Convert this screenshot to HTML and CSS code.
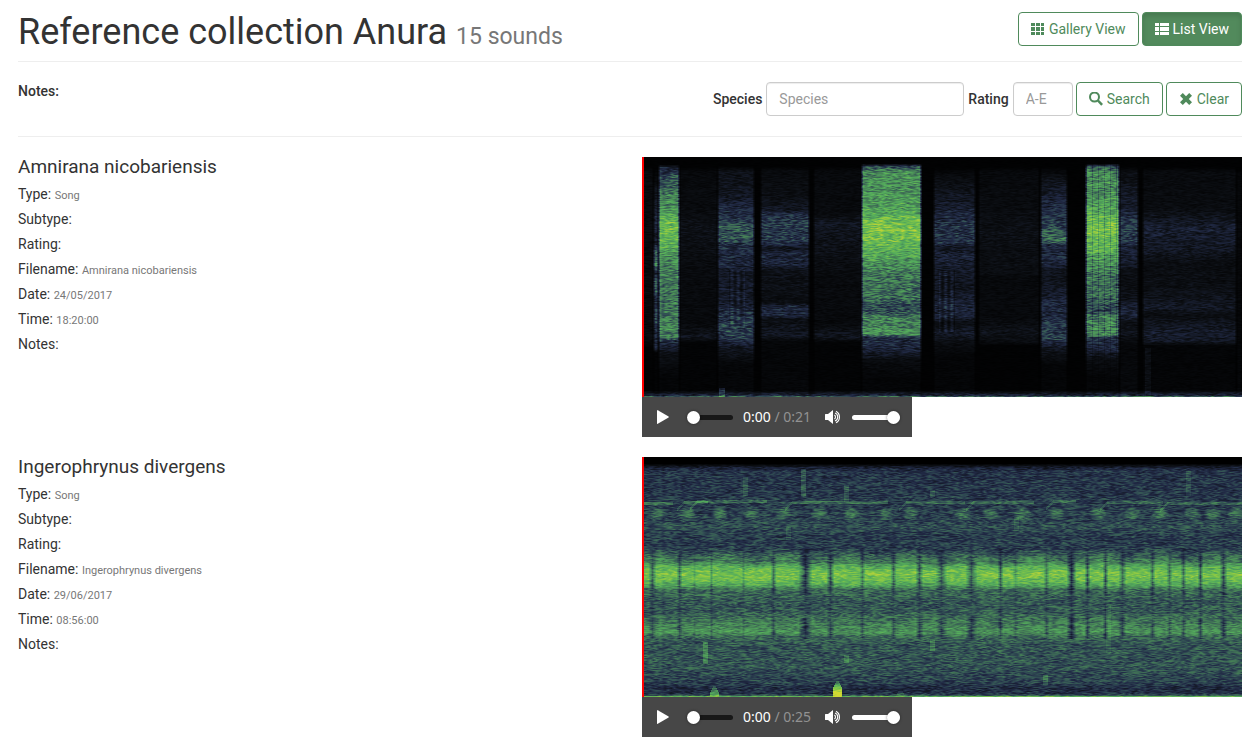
FILE: index.html
```
<!DOCTYPE html>
<html lang="en">
<head>
<meta charset="utf-8">
<title>Reference collection Anura</title>
<link rel="stylesheet" href="styles.css">
</head>
<body>
<svg class="sprite" aria-hidden="true">
  <symbol id="i-grid" viewBox="0 0 14 14"><path d="M0 1h4v3H0zM5 1h4v3H5zM10 1h3v3h-3zM0 5h4v4H0zM5 5h4v4H5zM10 5h3v4h-3zM0 10h4v3H0zM5 10h4v3H5zM10 10h3v3h-3z"/></symbol>
  <symbol id="i-list" viewBox="0 0 14 14"><path d="M0 1h4v3H0zM5 1h9v3H5zM0 5h4v4H0zM5 5h9v4H5zM0 10h4v3H0zM5 10h9v3H5z"/></symbol>
  <symbol id="i-search" viewBox="0 0 14 14"><circle cx="5.5" cy="5" r="4.500" fill="none" stroke="currentColor" stroke-width="2"/><path d="M8 9.2 9.6 7.600l4.400 4.400-1.800 1.800z"/></symbol>
  <symbol id="i-clear" viewBox="0 0 14 14"><path d="M3.8 1 7 4.2 10.2 1 13 3.8 9.8 7l3.2 3.2-2.8 2.8L7 9.8 3.8 13 1 10.2 4.2 7 1 3.8z"/></symbol>
  <symbol id="i-play" viewBox="0 0 12 14"><path d="M0 .4Q0-.2.8.2L11.6 6.5Q12 7 11.6 7.5L.8 13.8Q0 14.2 0 13.6z"/></symbol>
  <symbol id="i-volume" viewBox="0 0 16 14"><path d="M0 4.500Q0 4 .6 4H3L8 0v14L3 10H.6Q0 10 0 9.500z"/><path d="M9.400 5a2.400 2.400 0 0 1 0 4M10 3a4.300 4.300 0 0 1 0 8M11 1.200a6.600 6.600 0 0 1 0 11.600" fill="none" stroke="currentColor" stroke-width="1.100"/></symbol>
</svg>
<header class="page-header">
  <h1 class="page-title">Reference collection Anura <small>15 sounds</small></h1>
  <nav class="views">
    <a class="btn" href="#gallery"><svg class="icon"><use href="#i-grid"/></svg>Gallery View</a>
    <a class="btn btn-active" href="#list"><svg class="icon"><use href="#i-list"/></svg>List View</a>
  </nav>
</header>
<section class="toolbar">
  <p class="collection-notes">Notes:</p>
  <form class="filter">
    <label for="species">Species</label>
    <input class="field field-species" id="species" type="text" placeholder="Species">
    <label for="rating">Rating</label>
    <input class="field field-rating" id="rating" type="text" placeholder="A-E">
    <button class="btn" type="submit"><svg class="icon"><use href="#i-search"/></svg>Search</button>
    <button class="btn" type="reset"><svg class="icon"><use href="#i-clear"/></svg>Clear</button>
  </form>
</section>
<main class="sounds">
  <article class="sound">
    <div class="details">
      <h2 class="species-name">Amnirana nicobariensis</h2>
      <p>Type: <small>Song</small></p>
      <p>Subtype:</p>
      <p>Rating:</p>
      <p>Filename: <small>Amnirana nicobariensis</small></p>
      <p>Date: <small>24/05/2017</small></p>
      <p>Time: <small>18:20:00</small></p>
      <p>Notes:</p>
    </div>
    <div class="media">
      <div class="spectrogram"><canvas width="600" height="240" data-sound="calls" role="img" aria-label="Spectrogram of Amnirana nicobariensis"></canvas></div>
      <div class="player">
        <button class="player-btn" type="button" aria-label="Play"><svg class="play-icon"><use href="#i-play"/></svg></button>
        <input class="slider seek" type="range" min="0" max="21" value="0" aria-label="Position">
        <span class="time">0:00<span class="total"> / 0:21</span></span>
        <button class="player-btn" type="button" aria-label="Mute"><svg class="volume-icon"><use href="#i-volume"/></svg></button>
        <input class="slider volume" type="range" min="0" max="100" value="100" aria-label="Volume">
      </div>
    </div>
  </article>
  <article class="sound">
    <div class="details">
      <h2 class="species-name">Ingerophrynus divergens</h2>
      <p>Type: <small>Song</small></p>
      <p>Subtype:</p>
      <p>Rating:</p>
      <p>Filename: <small>Ingerophrynus divergens</small></p>
      <p>Date: <small>29/06/2017</small></p>
      <p>Time: <small>08:56:00</small></p>
      <p>Notes:</p>
    </div>
    <div class="media">
      <div class="spectrogram"><canvas width="600" height="240" data-sound="chorus" role="img" aria-label="Spectrogram of Ingerophrynus divergens"></canvas></div>
      <div class="player">
        <button class="player-btn" type="button" aria-label="Play"><svg class="play-icon"><use href="#i-play"/></svg></button>
        <input class="slider seek" type="range" min="0" max="25" value="0" aria-label="Position">
        <span class="time">0:00<span class="total"> / 0:25</span></span>
        <button class="player-btn" type="button" aria-label="Mute"><svg class="volume-icon"><use href="#i-volume"/></svg></button>
        <input class="slider volume" type="range" min="0" max="100" value="100" aria-label="Volume">
      </div>
    </div>
  </article>
</main>
<script src="spectrogram.js"></script>
</body>
</html>
```
FILE: styles.css
```
* { box-sizing: border-box; }
body {
  margin: 0;
  padding: 0 16px 0 18px;
  background: #fff;
  color: #333;
  font: 14px/20px Roboto, "Liberation Sans", sans-serif;
}
h1, h2, p { margin: 0; }
small { color: #777; font-weight: 400; line-height: 1; }
.sprite { position: absolute; width: 0; height: 0; }
.page-header {
  display: flex;
  justify-content: space-between;
  align-items: flex-start;
  padding: 12px 0 9px;
  border-bottom: 1px solid #eee;
}
.page-title { font-size: 36px; line-height: 40px; font-weight: 400; }
.page-title small { font-size: 23px; }
.views, .filter { display: flex; align-items: center; gap: 3px; }
.btn {
  display: flex;
  align-items: center;
  gap: 4px;
  height: 34px;
  padding: 0 12px;
  border: 1px solid #4f8a5b;
  border-radius: 4px;
  background: #fff;
  color: #4f8a5b;
  font: inherit;
  text-decoration: none;
  white-space: nowrap;
}
.btn-active { background: #528a5c; color: #fff; box-shadow: inset 0 3px 5px rgba(0, 0, 0, .125); }
.icon { width: 14px; height: 14px; fill: currentColor; }
.toolbar {
  display: flex;
  justify-content: space-between;
  align-items: flex-start;
  padding: 20px 0;
  border-bottom: 1px solid #eee;
}
.collection-notes, .filter label { font-weight: 500; line-height: 18px; }
.filter label { margin: 0 1px; }
.field {
  height: 34px;
  padding: 0 12px;
  border: 1px solid #ccc;
  border-radius: 4px;
  box-shadow: inset 0 1px 1px rgba(0, 0, 0, .075);
  background: #fff;
  font: inherit;
}
.field::placeholder { color: #999; }
.field-species { width: 198px; }
.field-rating { width: 60px; }
.sounds { display: grid; gap: 20px; padding: 20px 0 8px; }
.sound { display: grid; grid-template-columns: 1fr 1fr; gap: 24px; align-items: start; }
.details p { line-height: 15px; margin-bottom: 10px; }
.details small { font-size: 11px; }
.species-name { font-size: 19px; line-height: 20px; font-weight: 400; margin-bottom: 10px; }
.spectrogram { position: relative; max-width: 600px; background: #000; }
.spectrogram canvas { display: block; width: 100%; height: 240px; }
.spectrogram::before {
  content: "";
  position: absolute;
  inset: 0 auto 0 0;
  width: 2px;
  background: #f00;
}
.player {
  display: flex;
  align-items: center;
  width: 270px;
  height: 40px;
  padding: 0 12px 0 15px;
  background: #474747;
  color: #fff;
}
.player-btn { display: flex; padding: 0; border: 0; background: none; color: #fff; }
.play-icon { width: 12px; height: 14px; fill: currentColor; }
.volume-icon { width: 16px; height: 14px; fill: currentColor; }
.time { flex: 1; font: 14px/20px "Noto Sans", sans-serif; white-space: nowrap; }
.total { color: #929292; }
.slider { appearance: none; margin: 0; height: 14px; background: none; }
.seek { width: 46px; margin: 0 10px 0 18px; }
.volume { width: 48px; margin-left: 11px; }
.slider::-webkit-slider-runnable-track { height: 5px; border-radius: 3px; background: #181818; }
.volume::-webkit-slider-runnable-track { background: #fff; }
.slider::-webkit-slider-thumb {
  appearance: none;
  width: 13px;
  height: 13px;
  margin-top: -4px;
  border-radius: 50%;
  background: #fff;
  box-shadow: 0 0 3px rgba(0, 0, 0, .5);
}
```
FILE: spectrogram.js
```
(function () {
  // Colour scale, from silence to the loudest level.
  const SCALE = [
    [0, 0, 0, 0], [0.12, 12, 15, 20], [0.3, 33, 42, 70], [0.42, 50, 80, 84],
    [0.55, 70, 128, 86], [0.7, 84, 172, 92], [0.84, 126, 196, 72], [1, 210, 216, 50]
  ];

  function lerpTable(table, x) {
    if (x <= table[0][0]) return table[0].slice(1);
    for (let i = 1; i < table.length; i++) {
      if (x <= table[i][0]) {
        const a = table[i - 1], b = table[i];
        const t = (x - a[0]) / (b[0] - a[0]);
        return a.slice(1).map((v, k) => v + (b[k + 1] - v) * t);
      }
    }
    return table[table.length - 1].slice(1);
  }

  function hash(x, y) {
    let h = Math.imul(x, 374761393) + Math.imul(y, 668265263) | 0;
    h = Math.imul(h ^ (h >>> 13), 1274126177);
    return ((h ^ (h >>> 16)) >>> 0) / 4294967296;
  }

  // Noise in [-1, 1] that is stretched along the time axis.
  function noise(x, y) {
    const step = 3, shift = hash(7, y) * step;
    const p = (x + shift) / step, i = Math.floor(p), t = p - i;
    const fine = hash(i, y) * (1 - t) + hash(i + 1, y) * t;
    const q = x / 7, j = Math.floor(q), u = q - j, r = (y + 1) >> 1;
    const wide = hash(j + 900, r) * (1 - u) + hash(j + 901, r) * u;
    return (fine * 0.7 + wide * 0.3) * 2 - 1;
  }

  const LOUD = [[6, 0], [9, .38], [14, .58], [40, .61], [55, .68], [64, .78], [74, .82], [84, .77], [97, .67], [110, .57], [120, .51], [140, .49], [148, .38], [154, .4], [160, .54], [177, .57], [180, .3], [193, .23], [202, .1], [220, .04]];
  // Each call: start, end, level by frequency row.
  const CALLS = [
    [0, 11, [[8, 0], [15, .08], [180, .08], [190, .02]]],
    [11, 16, [[8, 0], [30, .12], [60, .25], [85, .2], [95, .45], [108, .5], [114, .2], [124, .45], [134, .48], [142, .25], [155, .4], [175, .3], [190, .25], [195, .03]]],
    [16, 37, [[7, 0], [10, .25], [20, .4], [35, .52], [54, .6], [62, .75], [84, .76], [95, .6], [120, .54], [145, .5], [165, .56], [180, .54], [184, .3], [195, .12], [220, .04]]],
    [37, 75, [[8, 0], [15, .07], [50, .08], [70, .12], [120, .08], [165, .07], [180, .15], [185, .03]]],
    [75, 112, [[8, 0], [14, .12], [42, .17], [47, .24], [62, .29], [68, .41], [80, .44], [88, .28], [108, .25], [115, .18], [145, .2], [155, .29], [175, .36], [182, .3], [190, .16], [208, .05]]],
    [118, 167, [[8, 0], [14, .08], [35, .1], [53, .16], [56, .27], [66, .35], [85, .32], [91, .15], [96, .25], [107, .24], [112, .13], [145, .1], [149, .25], [158, .25], [162, .11], [178, .16], [184, .05]]],
    [171, 219, [[8, 0], [14, .07], [55, .08], [65, .15], [80, .14], [120, .08], [165, .07], [180, .15], [185, .03]]],
    [219, 279, LOUD],
    [291, 333, [[8, 0], [20, .09], [50, .2], [66, .32], [84, .31], [90, .17], [97, .24], [110, .2], [130, .15], [148, .24], [160, .22], [165, .1], [175, .2], [185, .1], [200, .04]]],
    [336, 397, [[8, 0], [15, .07], [50, .09], [75, .12], [90, .1], [115, .1], [120, .07], [160, .07], [175, .13], [185, .08], [188, .02]]],
    [398, 425, [[8, 0], [20, .12], [45, .24], [65, .34], [76, .44], [83, .48], [88, .27], [107, .25], [113, .14], [130, .16], [145, .25], [160, .27], [172, .36], [182, .33], [190, .16], [208, .04]]],
    [443, 477, LOUD],
    [477, 496, [[8, 0], [15, .1], [50, .2], [66, .36], [84, .32], [90, .22], [107, .2], [113, .1], [140, .12], [150, .24], [158, .24], [165, .1], [176, .15], [186, .06]]],
    [500, 594, [[8, 0], [15, .08], [50, .09], [62, .16], [72, .22], [84, .18], [95, .16], [105, .1], [130, .11], [150, .17], [158, .1], [175, .2], [184, .17], [188, .04]]],
    [594, 600, [[8, 0], [20, .06], [180, .05]]]
  ];

  function callsLevel(x, y) {
    let v = 0.015;
    for (const [a, b, profile] of CALLS) {
      const edge = Math.min(1, (x - a + 1) / 3, (b - x + 1) / 3);
      if (edge > 0) v = Math.max(v, lerpTable(profile, y)[0] * edge);
    }
    if (x > 443 && x < 477 && (x % 6 === 0)) v *= 0.82;
    if (x > 86 && x < 103 && y > 112 && y < 170) v += 0.05 * Math.sin(x);
    if (x > 296 && x < 313 && y > 112 && y < 175) v += 0.06 * Math.sin(x);
    if (x > 502 && x < 509 && y > 190) v += 0.07;
    if (x > 76 && x < 83 && y > 230) v += 0.2;
    if (y > 233) v += (y - 233) * 0.045;
    if (y > 238) v += 0.15;
    return v;
  }

  const CHORUS = [[6, 0], [10, .22], [14, .32], [42, .34], [60, .36], [70, .4], [78, .35], [92, .36], [98, .46], [105, .55], [109, .7], [116, .82], [122, .78], [128, .67], [132, .5], [145, .43], [155, .44], [161, .5], [168, .56], [175, .61], [179, .49], [187, .42], [210, .42], [225, .36], [230, .29], [236, .3], [238, .45], [239, .75]];
  // Pauses between pulses: centre, half width, depth.
  const PAUSES = [[10, 3, .65], [37, 2, .6], [52, 1, .2], [69, 1, .35], [101, 1, .25], [131, 2, .55], [163, 6, .95], [188, 3, .75], [220, 2, .5], [251, 2, .55], [277, 3, .7], [299, 5, .65], [329, 5, .75], [358, 2, .65], [373, 2, .3], [404, 2, .5], [429, 4, 1], [445, 2, .7], [463, 2, .75], [480, 3, .6], [510, 2, .6], [527, 2, .5], [541, 2, .6], [558, 2, .75], [581, 3, .75]];
  const BLOBS = [17, 44, 77, 109, 140, 177, 209, 242, 268, 320, 348, 380, 413, 455, 490, 518, 550, 570, 593];
  const TONES = [[0, 30, 46], [42, 65, 45], [55, 124, 44], [150, 245, 45], [264, 322, 45], [331, 391, 45], [411, 433, 44], [465, 520, 45], [525, 600, 46]];
  const STREAKS = [[161, 12, 38, .13], [103, 20, 38, .08], [204, 28, 44, .1], [290, 33, 39, .1], [546, 14, 38, .08], [63, 185, 206, .14], [204, 198, 205, .12], [290, 183, 193, .12], [403, 218, 227, .12], [146, 70, 82, .08], [374, 60, 72, .08], [466, 148, 195, .06]];
  // Short low sounds: centre, top row, level.
  const THUMPS = [[72, 229, .8], [195, 224, 1], [258, 232, .62], [148, 236, .6], [442, 233, .5], [483, 233, .5], [314, 237, .5], [380, 237, .7]];

  function chorusLevel(x, y) {
    let v = lerpTable(CHORUS, y)[0];
    let dip = 0;
    for (const [c, w, d] of PAUSES) dip = Math.max(dip, d * Math.max(0, 1 - Math.abs(x - c) / (w + 1)));
    if (y > 90 && y < 182) {
      v -= dip * (y < 138 || y > 160 ? Math.max(0, v - 0.3) : 0.08);
    }
    if (y >= 92 && y < 110) v += 0.04 * Math.sin(x / 10);
    if (y > 48 && y < 64) {
      for (const c of BLOBS) {
        const d = Math.hypot((x - c) / 9, (y - 56) / 7);
        if (d < 1) v += 0.16 * (1 - d * d);
      }
    }
    for (const [a, b, row] of TONES) {
      if (x >= a && x <= b && Math.abs(y - row) < 2) v += 0.13;
      if (x > a - 8 && x < a && Math.abs(y - row - (a - x)) < 2) v += 0.1;
    }
    for (const [c, a, b, d] of STREAKS) if (Math.abs(x - c) < 3 && y >= a && y <= b) v += d;
    for (const [c, top, d] of THUMPS) {
      const w = 1 + Math.min(3, (y - top) / 2);
      if (y >= top && Math.abs(x - c) <= w) v = Math.max(v, d * Math.min(1, 0.5 + (y - top) / 20));
    }
    return v;
  }

  document.querySelectorAll('canvas[data-sound]').forEach(function (canvas) {
    const chorus = canvas.dataset.sound === 'chorus';
    const level = chorus ? chorusLevel : callsLevel;
    const ctx = canvas.getContext('2d');
    const w = canvas.width, h = canvas.height;
    const image = ctx.createImageData(w, h);
    for (let y = 0; y < h; y++) {
      for (let x = 0; x < w; x++) {
        const v = level(x, y);
        const n = noise(x, y + (chorus ? 500 : 0));
        const spread = Math.min(chorus ? 0.15 : 0.2, v * 0.6);
        const rgb = lerpTable(SCALE, Math.min(1, v + n * spread));
        const k = (y * w + x) * 4;
        image.data[k] = rgb[0];
        image.data[k + 1] = rgb[1];
        image.data[k + 2] = rgb[2];
        image.data[k + 3] = 255;
      }
    }
    ctx.putImageData(image, 0, 0);
  });
})();
```
